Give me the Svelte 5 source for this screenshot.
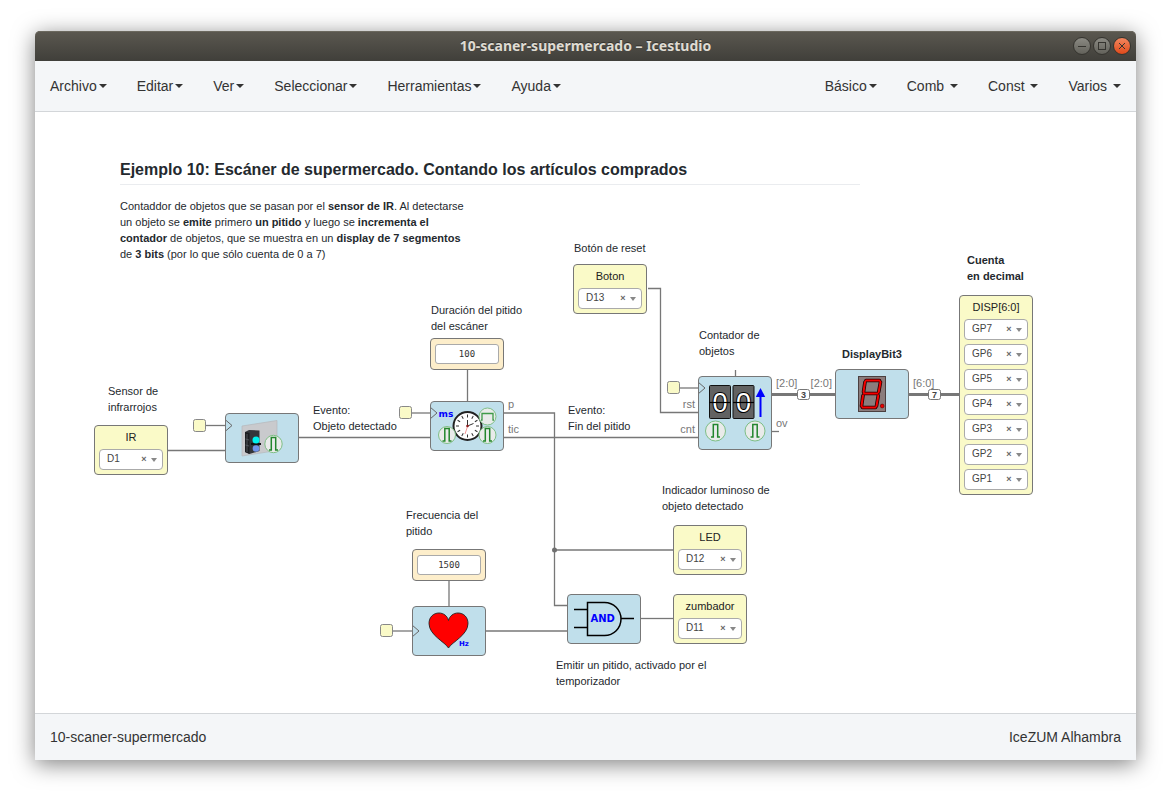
<script>
  const projectName = '10-scaner-supermercado';
  const board = 'IceZUM Alhambra';

  const mainMenu = ['Archivo', 'Editar', 'Ver', 'Seleccionar', 'Herramientas', 'Ayuda'];
  const blockMenu = [
    { text: 'Básico' },
    { text: 'Comb', spaced: true },
    { text: 'Const', spaced: true },
    { text: 'Varios', spaced: true }
  ];

  // View offset of the diagram inside the canvas
  const pan = { x: -35, y: -112 };

  const ioBlocks = [
    { id: 'ir', name: 'IR', x: 94, y: 425, pins: ['D1'] },
    { id: 'boton', name: 'Boton', x: 573, y: 264, pins: ['D13'] },
    { id: 'led', name: 'LED', x: 673, y: 525, pins: ['D12'] },
    { id: 'zumbador', name: 'zumbador', x: 673, y: 594, pins: ['D11'] },
    { id: 'disp', name: 'DISP[6:0]', x: 959, y: 295, pins: ['GP7', 'GP6', 'GP5', 'GP4', 'GP3', 'GP2', 'GP1'] }
  ];

  const constants = [
    { note: 'duracion', x: 430, y: 338, value: '100' },
    { note: 'frecuencia', x: 412, y: 549, value: '1500' }
  ];

  const notes = [
    { id: 'sensor', x: 108, y: 383, lines: ['Sensor de', 'infrarrojos'] },
    { id: 'duracion', x: 431, y: 302, lines: ['Duración del pitido', 'del escáner'] },
    { id: 'evento1', x: 313, y: 402, lines: ['Evento:', 'Objeto detectado'] },
    { id: 'evento2', x: 568, y: 402, lines: ['Evento:', 'Fin del pitido'] },
    { id: 'reset', x: 574, y: 240, lines: ['Botón de reset'] },
    { id: 'contador', x: 699, y: 327, lines: ['Contador de', 'objetos'] },
    { id: 'bit3', x: 842, y: 346, lines: ['DisplayBit3'], strong: true },
    { id: 'cuenta', x: 967, y: 252, lines: ['Cuenta', 'en decimal'], strong: true },
    { id: 'frecuencia', x: 406, y: 507, lines: ['Frecuencia del', 'pitido'] },
    { id: 'indicador', x: 662, y: 482, lines: ['Indicador luminoso de', 'objeto detectado'] },
    { id: 'emitir', x: 556, y: 657, lines: ['Emitir un pitido, activado por el', 'temporizador'] }
  ];

  const blocks = [
    { kind: 'sensor', x: 225, y: 413, h: 50 },
    { kind: 'timer', x: 430, y: 401, h: 50 },
    { kind: 'counter', x: 698, y: 376, h: 74 },
    { kind: 'display', x: 835, y: 369, h: 50 },
    { kind: 'heart', x: 412, y: 606, h: 50 },
    { kind: 'and', x: 567, y: 594, h: 50 }
  ];

  const wires = [
    'M168 450.5H225',
    'M299 437.5H430',
    'M206 425.5H225',
    'M411 413H430',
    'M467.5 369V401',
    'M504 413H554.5V605.5H567',
    'M554.5 550H673',
    'M504 437.5H698',
    'M648 288.5H660.5V412.5H698',
    'M679 388H698',
    'M735.5 370V376',
    'M772 431.5H779',
    'M392 631H412',
    'M449 581V606',
    'M486 631H567',
    'M641 618.5H673'
  ];

  const clocks = [[193.5, 419.5], [399.5, 406.5], [667.5, 381.5], [380.5, 624.5]];

  const ports = [
    { text: 'p', x: 508, y: 408 },
    { text: 'tic', x: 508, y: 433 },
    { text: 'rst', x: 695, y: 408, end: true },
    { text: 'cnt', x: 695, y: 433, end: true },
    { text: '[2:0]', x: 776, y: 387 },
    { text: '[2:0]', x: 832, y: 387, end: true },
    { text: 'ov', x: 776, y: 427 },
    { text: '[6:0]', x: 913, y: 387 }
  ];

  const buses = [
    { d: 'M772 394.5H835', size: 3, x: 797 },
    { d: 'M909 394.5H959', size: 7, x: 928 }
  ];

  const segments =
    'M31 11.5H44.5M29 24.5H42.5M27.500 38.5H40.5M30 13L28.500 23M45.500 13L43.700 23M28 26.500L26.500 37M43.300 26.500L41.500 37';
</script>

{#snippet pulse(cx, cy, r, wide)}
  <g transform="translate({cx} {cy})">
    <circle {r} fill="#e9ebea" stroke="#7fbf86" />
    {#if wide}
      <path d="M-6.500 3.500H-5.500V-3H5.500V3.500H6.500" fill="none" stroke="#3f9a48" stroke-width="1.300" />
    {:else}
      <path d="M-4.500 6H-2.200V-6.500H2.200V6H4.500" fill="none" stroke="#23862d" stroke-width="1.500" />
    {/if}
  </g>
{/snippet}

{#snippet clockInput(y)}
  <path d="M0 {y - 6}L7 {y}L0 {y + 6}" fill="none" stroke="#666" />
{/snippet}

<div class="desktop">
  <div class="window">
    <header class="titlebar">
      <h1>{projectName} – Icestudio</h1>
      <div class="controls">
        <button aria-label="Minimizar"><svg viewBox="0 0 16 16"><path d="M4 8.500H12" /></svg></button>
        <button aria-label="Maximizar"><svg viewBox="0 0 16 16"><rect x="4.500" y="4.500" width="7" height="7" /></svg></button>
        <button class="close" aria-label="Cerrar"><svg viewBox="0 0 16 16"><path d="M5 5L11 11M11 5L5 11" /></svg></button>
      </div>
    </header>

    <nav class="menubar">
      <div class="menu">
        {#each mainMenu as item}
          <button>{item}<span class="caret"></span></button>
        {/each}
      </div>
      <div class="menu">
        {#each blockMenu as item}
          <button>{item.text}{#if item.spaced}&nbsp;{/if}<span class="caret"></span></button>
        {/each}
      </div>
    </nav>

    <main class="canvas">
      <div class="layer" style:left="{pan.x}px" style:top="{pan.y}px">
        <svg class="wires" width="1" height="1">
          {#each wires as d}
            <path {d} class="wire" />
          {/each}
          <circle cx="554.500" cy="550" r="2.500" fill="#707070" />
          {#each clocks as [x, y]}
            <rect {x} {y} width="12" height="12" rx="2" class="clk" />
          {/each}
          {#each buses as bus}
            <path d={bus.d} class="bus" />
            <rect x={bus.x + 0.5} y="389.500" width="12" height="10" rx="2" class="size-box" />
            <text x={bus.x + 6.5} y="398" class="size">{bus.size}</text>
          {/each}
          {#each ports as port}
            <text x={port.x} y={port.y} class="port" class:end={port.end}>{port.text}</text>
          {/each}
        </svg>

        <article class="intro" style:left="120px" style:top="160px">
          <h2>Ejemplo 10: Escáner de supermercado. Contando los artículos comprados</h2>
          <p>
            Contaddor de objetos que se pasan por el <b>sensor de IR</b>. Al detectarse<br />
            un objeto se <b>emite</b> primero <b>un pitido</b> y luego se <b>incrementa el<br />
            contador</b> de objetos, que se muestra en un <b>display de 7 segmentos</b><br />
            de <b>3 bits</b> (por lo que sólo cuenta de 0 a 7)
          </p>
        </article>

        {#each notes as note}
          <p class="note" class:strong={note.strong} id="note-{note.id}" style:left="{note.x}px" style:top="{note.y}px">
            {#each note.lines as line}<span>{line}</span>{/each}
          </p>
        {/each}

        {#each ioBlocks as block}
          <section class="block io" style:left="{block.x}px" style:top="{block.y}px">
            <label id="name-{block.id}" for="{block.id}-0">{block.name}</label>
            <div class="pins">
              {#each block.pins as pin, i}
                <div class="pin">
                  <select id="{block.id}-{i}" aria-labelledby="name-{block.id}"><option>{pin}</option></select>
                  <button class="clear">×</button>
                  <span class="arrow"></span>
                </div>
              {/each}
            </div>
          </section>
        {/each}

        {#each constants as constant}
          <section class="block constant" style:left="{constant.x}px" style:top="{constant.y}px">
            <input value={constant.value} aria-labelledby="note-{constant.note}" />
          </section>
        {/each}

        {#each blocks as block}
          <section class="block generic" style:left="{block.x}px" style:top="{block.y}px">
            <svg width="72" height={block.h - 2} viewBox="1 1 72 {block.h - 2}">
              {#if block.kind === 'sensor'}
                {@render clockInput(12.5)}
                <path d="M17 13L52 7.500V37.500L17 43Z" fill="#c9cacd" stroke="#b5b8bb" stroke-width=".7" />
                <path d="M20 19L24 17L34.500 17.500V38L24.500 41L20 39Z" fill="#33363a" />
                <path d="M20 19L24.500 20V41L20 39Z" fill="#1b1d20" />
                <path d="M22 21V39M20.500 26L24 27M20.500 32L24 33" stroke="#5b6066" stroke-width=".8" />
                <path d="M26 31H36" stroke="#101214" stroke-width="2" />
                <circle cx="31" cy="27" r="3.500" fill="#00f2ee" />
                <circle cx="31" cy="35.500" r="3.300" fill="#7094ea" />
                {@render pulse(48.5, 31, 8.7)}
              {:else if block.kind === 'timer'}
                {@render clockInput(12)}
                <text x="8.500" y="16" class="blue" font-size="9">ms</text>
                <circle cx="37.500" cy="25" r="14" fill="#fff" stroke="#222" stroke-width="2" />
                {#each [0, 30, 60, 90, 120, 150, 180, 210, 240, 270, 300, 330] as angle}
                  <path d="M37.500 13.500V16.500" stroke="#333" transform="rotate({angle} 37.500 25)" />
                {/each}
                <path d="M37.500 25V19M37.500 25L43.500 22.500" stroke="#333" />
                <path d="M38 24L35 33" stroke="#f08080" stroke-width=".8" />
                <circle cx="37.500" cy="25" r="1.300" fill="#8c1c1c" />
                {@render pulse(17, 34, 8.5)}
                {@render pulse(57.5, 15.5, 8.5, true)}
                {@render pulse(57.5, 34, 8.5)}
              {:else if block.kind === 'counter'}
                {@render clockInput(12)}
                {#each [11.5, 35] as x}
                  <rect {x} y="9.500" width="21" height="33" rx="1" fill="#626262" stroke="#111" />
                  <text x={x + 10.5} y="36" class="digit">0</text>
                  <path d="M{x} 26.500h21" stroke="#000" stroke-width="1.200" />
                {/each}
                <path d="M62.500 41V20" stroke="#00f" stroke-width="2" />
                <path d="M57.800 21L62.500 12L67.200 21Z" fill="#00f" />
                {@render pulse(17.5, 55, 10)}
                {@render pulse(57, 55, 10)}
              {:else if block.kind === 'display'}
                <rect x="23.500" y="7.500" width="27" height="35" fill="#8b7c7c" stroke="#4b4040" />
                <path d={segments} stroke="#1c0000" stroke-width="3.600" stroke-linecap="round" />
                <path d={segments} stroke="#f50000" stroke-width="2" stroke-linecap="round" />
                <circle cx="47.200" cy="37" r="1.900" fill="#f00000" stroke="#5c0000" stroke-width=".6" />
              {:else if block.kind === 'heart'}
                {@render clockInput(25)}
                <path
                  d="M36.500 42C33 36 17 29 17 17.500C17 11 21.500 7 27 7C31.500 7 35.500 10 36.500 14.500C37.500 10 41.500 7 46 7C51.500 7 56 11 56 17.500C56 29 40 36 36.500 42Z"
                  fill="#f00"
                  stroke="#222"
                  stroke-width=".9"
                />
                <text x="47" y="40" class="blue" font-size="7">Hz</text>
              {:else}
                <path
                  d="M20.500 8.500H37.500A16.500 16.500 0 0 1 37.500 41.500H20.500ZM7 15.500H20.500M7 33.500H20.500M54 24.500H67"
                  fill="none"
                  stroke="#000"
                  stroke-width="1.500"
                />
                <text x="23.500" y="28" class="blue" font-size="10">AND</text>
              {/if}
            </svg>
          </section>
        {/each}
      </div>
    </main>

    <footer>
      <span>{projectName}</span>
      <span>{board}</span>
    </footer>
  </div>
</div>

<style>
  :global(body) {
    margin: 0;
    background: #fff;
  }

  .desktop,
  .desktop :global(*) {
    box-sizing: border-box;
  }

  .desktop {
    display: flex;
    min-height: 100vh;
    padding: 31px 31px 46px 35px;
    font: 14px/20px 'Liberation Sans', Arial, sans-serif;
    color: #333;
  }

  .window {
    display: flex;
    flex: 1;
    flex-direction: column;
    min-width: 0;
    border-radius: 5px 5px 0 0;
    background: #fff;
    box-shadow: 0 4px 22px rgba(0, 0, 0, 0.5);
  }

  button {
    padding: 0;
    border: 0;
    background: none;
    color: inherit;
    font: inherit;
  }

  .titlebar {
    display: grid;
    grid-template-columns: 1fr auto 1fr;
    align-items: center;
    height: 30px;
    padding: 0 5px;
    border-radius: 5px 5px 0 0;
    background: linear-gradient(#5b5850, #403f3a);
    box-shadow: inset 0 1px #6b685e;
  }

  .titlebar h1 {
    grid-column: 2;
    margin: 0;
    color: #dfdbd2;
    font: bold 14px/20px 'Noto Sans', 'Open Sans', sans-serif;
    text-shadow: 0 -1px #33322e;
  }

  .controls {
    display: flex;
    gap: 2px;
    justify-content: flex-end;
  }

  .controls button {
    width: 18px;
    height: 18px;
    border: 1px solid #35342f;
    border-radius: 50%;
    background: linear-gradient(#8b8a83, #63625b);
  }

  .controls .close {
    background: linear-gradient(#f4875f, #df4a1b);
  }

  .controls svg {
    display: block;
    width: 16px;
    height: 16px;
    fill: none;
    stroke: #35342f;
  }

  .menubar {
    display: flex;
    justify-content: space-between;
    height: 51px;
    border-bottom: 1px solid #d3d6d9;
    background: #f4f6f8;
  }

  .menu {
    display: flex;
  }

  .menu button {
    display: flex;
    align-items: center;
    padding: 0 15px;
  }

  .caret {
    margin-left: 2px;
    border: 4px solid transparent;
    border-top-color: #333;
    border-bottom: 0;
  }

  .canvas {
    position: relative;
    flex: 1;
    overflow: hidden;
  }

  .layer {
    position: absolute;
  }

  .wires {
    position: absolute;
    top: 0;
    left: 0;
    overflow: visible;
  }

  .wire {
    fill: none;
    stroke: #777;
    stroke-width: 1.3;
  }

  .clk {
    fill: #fafac8;
    stroke: #888;
  }

  .bus {
    stroke: #777;
    stroke-width: 3;
  }

  .size-box {
    fill: #fff;
    stroke: #777;
  }

  .size {
    fill: #444;
    font-size: 9px;
    font-weight: bold;
    text-anchor: middle;
  }

  .port {
    fill: #777;
    font-size: 11px;
  }

  .end {
    text-anchor: end;
  }

  .intro,
  .note,
  .block {
    position: absolute;
  }

  .intro,
  .note {
    color: #24292e;
    font-size: 11px;
    line-height: 16px;
    white-space: nowrap;
  }

  .intro {
    width: 740px;
  }

  .intro h2 {
    margin: 0;
    padding-bottom: 4px;
    border-bottom: 1px solid #eaecef;
    font-size: 16px;
    line-height: 20px;
  }

  .intro p {
    margin: 13px 0 0;
  }

  .note {
    margin: 0;
  }

  .note span {
    display: block;
  }

  .strong {
    font-weight: bold;
  }

  .block {
    width: 74px;
    border: 1px solid #777;
    border-radius: 4px;
  }

  .io {
    padding: 3px 4px 4px;
    background: #fafac8;
  }

  .io label {
    display: block;
    font-size: 11px;
    line-height: 16px;
    text-align: center;
    color: #222;
  }

  .pins {
    display: grid;
    gap: 4px;
    padding-top: 4px;
  }

  .pin {
    position: relative;
    height: 21px;
  }

  .pin select {
    appearance: none;
    display: block;
    width: 100%;
    height: 100%;
    padding: 0 24px 1px 7px;
    border: 1px solid #aaa;
    border-radius: 4px;
    background: #fff;
    color: #444;
    font: 10px/16px 'Liberation Sans', Arial, sans-serif;
  }

  .clear {
    position: absolute;
    top: 4px;
    right: 14px;
    width: 10px;
    color: #666;
    font-size: 9px;
    font-weight: bold;
    line-height: 12px;
  }

  .arrow {
    position: absolute;
    top: 9px;
    right: 6px;
    border: 3px solid transparent;
    border-top: 4px solid #888;
    border-bottom: 0;
  }

  .constant {
    padding: 5px 4px;
    background: #fdeecb;
  }

  .constant input {
    display: block;
    width: 100%;
    height: 20px;
    padding: 0;
    border: 1px solid #aaa;
    border-radius: 3px;
    background: #fff;
    color: #333;
    font: 9px/16px 'DejaVu Sans Mono', monospace;
    text-align: center;
  }

  .generic {
    background: #c0dfeb;
  }

  .generic svg {
    display: block;
  }

  .blue {
    fill: #00f;
    font-family: 'DejaVu Sans', sans-serif;
    font-weight: bold;
  }

  .digit {
    fill: #fff;
    stroke: #000;
    stroke-width: 2;
    paint-order: stroke;
    font-size: 27px;
    text-anchor: middle;
  }

  footer {
    display: flex;
    align-items: center;
    justify-content: space-between;
    height: 47px;
    padding: 0 15px;
    border-top: 1px solid #d3d6d9;
    background: #f4f6f8;
  }
</style>
